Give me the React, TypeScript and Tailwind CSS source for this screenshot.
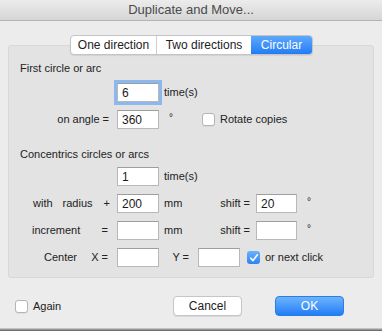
import React from 'react';

const font = { fontFamily: '"Liberation Sans", Arial, sans-serif' };

function Field({ value, focused = false, w = 'w-[42px]' }: { value?: string; focused?: boolean; w?: string }) {
  return (
    <div
      className={`${w} h-[19px] shrink-0 bg-white border border-[#b8b8b8] border-t-[#9e9e9e] pl-[4px] flex items-center text-[12px] text-[#1a1a1a] ${
        focused ? 'shadow-[0_0_0_3px_#8bb8ef]' : ''
      }`}
    >
      {value}
    </div>
  );
}

function Check({ checked = false }: { checked?: boolean }) {
  if (checked) {
    return (
      <div className="w-[13px] h-[13px] shrink-0 rounded-[3px] bg-gradient-to-b from-[#6cb1fb] to-[#2a83f5] flex items-center justify-center">
        <svg width="10" height="10" viewBox="0 0 10 10" fill="none">
          <path d="M1.8 5.2 L4 7.6 L8.4 1.8" stroke="white" strokeWidth="1.6" strokeLinecap="round" strokeLinejoin="round" />
        </svg>
      </div>
    );
  }
  return <div className="w-[13px] h-[13px] shrink-0 rounded-[3px] bg-white border border-[#b5b5b5] shadow-[0_1px_0_rgba(0,0,0,0.05)]" />;
}

export default function App() {
  return (
    <div className="w-[382px] h-[331px] bg-[#ececec] flex flex-col text-[11px] text-[#222] select-none" style={font}>
      {/* title bar */}
      <div className="h-[21px] shrink-0 bg-gradient-to-b from-[#ececec] to-[#d6d6d6] border-b border-[#b4b4b4] flex items-center justify-center text-[13px] text-[#4b4b4b]">
        Duplicate and Move...
      </div>

      {/* tabs */}
      <div className="mt-[14px] flex justify-center relative z-10 -mb-[10px] pl-[1px]">
        <div className="flex h-[20px] rounded-[4px] border border-[#c4c4c4] bg-white shadow-[0_1px_1px_rgba(0,0,0,0.08)] overflow-hidden text-[12px]">
          <div className="w-[86px] flex items-center justify-center border-r border-[#d0d0d0] text-[#222]">One direction</div>
          <div className="w-[94px] flex items-center justify-center text-[#222]">Two directions</div>
          <div className="w-[61px] flex items-center justify-center bg-gradient-to-b from-[#5ea8fc] to-[#1f7cf5] text-white">Circular</div>
        </div>
      </div>

      {/* group box */}
      <div className="mx-[8px] h-[233px] shrink-0 bg-[#e3e3e3] border border-[#d8d8d8] rounded-[3px] pt-[15px] flex flex-col">
        <div className="h-[14px] pl-[11px] flex items-center">First circle or arc</div>

        <div className="mt-[8px] flex items-center h-[19px]">
          <div className="w-[108px]" />
          <Field value="6" focused />
          <span className="ml-[5px]">time(s)</span>
        </div>

        <div className="mt-[8px] flex items-center h-[19px]">
          <div className="w-[108px] pr-[8px] text-right">on angle =</div>
          <Field value="360" />
          <div className="w-[43px] pl-[10px] self-start text-[10px]">°</div>
          <Check />
          <span className="ml-[5px]">Rotate copies</span>
        </div>

        <div className="mt-[18px] h-[14px] pl-[11px] flex items-center">Concentrics circles or arcs</div>

        <div className="mt-[6px] flex items-center h-[19px]">
          <div className="w-[108px]" />
          <Field value="1" />
          <span className="ml-[5px]">time(s)</span>
        </div>

        <div className="mt-[8px] flex items-center h-[19px]">
          <div className="w-[108px] flex items-center">
            <span className="ml-[24px]">with</span>
            <span className="ml-[10px]">radius</span>
            <span className="ml-[11px]">+</span>
          </div>
          <Field value="200" />
          <div className="w-[97px] pl-[5px] pr-[6px] flex justify-between">
            <span>mm</span>
            <span>shift =</span>
          </div>
          <Field value="20" w="w-[41px]" />
          <span className="ml-[10px] self-start text-[10px]">°</span>
        </div>

        <div className="mt-[8px] flex items-center h-[19px]">
          <div className="w-[108px] pl-[23px] pr-[9px] flex justify-between">
            <span>increment</span>
            <span>=</span>
          </div>
          <Field />
          <div className="w-[97px] pl-[5px] pr-[6px] flex justify-between">
            <span>mm</span>
            <span>shift =</span>
          </div>
          <Field w="w-[41px]" />
          <span className="ml-[10px] self-start text-[10px]">°</span>
        </div>

        <div className="mt-[8px] flex items-center h-[19px]">
          <div className="w-[108px] pl-[35px] pr-[9px] flex justify-between">
            <span>Center</span>
            <span>X =</span>
          </div>
          <Field />
          <div className="w-[39px] pr-[9px] text-right">Y =</div>
          <Field />
          <div className="ml-[7px]">
            <Check checked />
          </div>
          <span className="ml-[5px]">or next click</span>
        </div>
      </div>

      {/* footer */}
      <div className="mt-[18px] h-[20px] flex items-center">
        <div className="w-[173px] pl-[15px] flex items-center">
          <Check />
          <span className="ml-[5px]">Again</span>
        </div>
        <div className="w-[69px] h-[20px] rounded-[4px] bg-white border border-[#c6c6c6] shadow-[0_1px_0_rgba(0,0,0,0.08)] flex items-center justify-center text-[12px] text-[#222]">
          Cancel
        </div>
        <div className="ml-[33px] w-[69px] h-[20px] rounded-[4px] bg-gradient-to-b from-[#6cb3fd] to-[#1e7df6] border border-[#2a7ce8] flex items-center justify-center text-[12px] text-white">
          OK
        </div>
      </div>

      <div className="mt-auto h-[3px] bg-gradient-to-b from-[#d8d8d8] to-[#5c5c5c]" />
    </div>
  );
}
